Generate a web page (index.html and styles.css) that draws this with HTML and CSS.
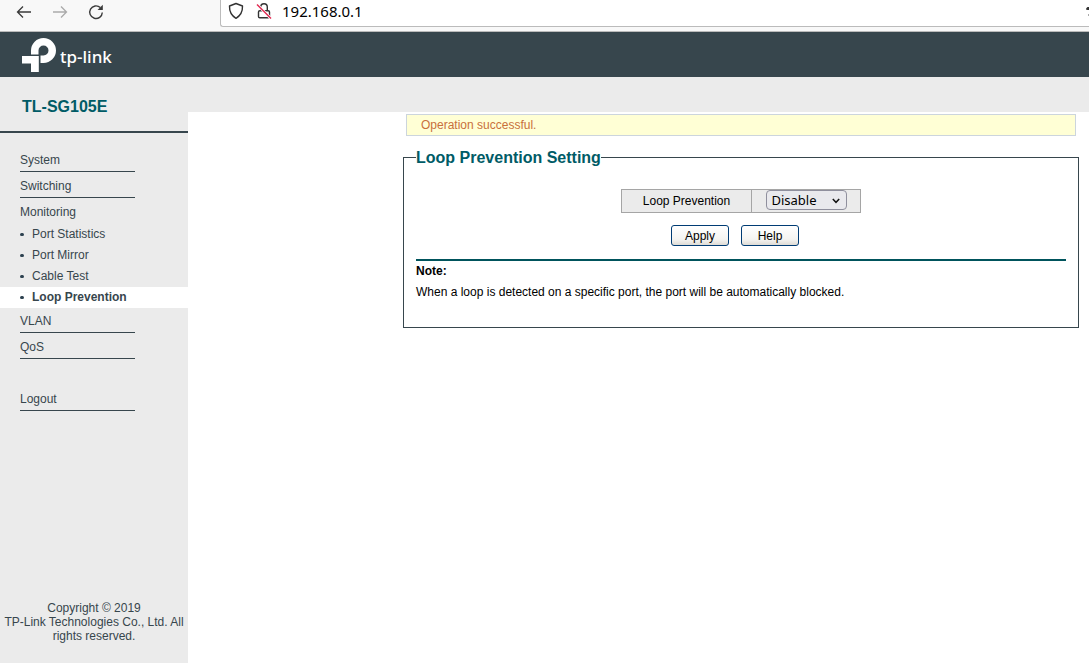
FILE: index.html
```html
<!DOCTYPE html>
<html lang="en">
<head>
<meta charset="utf-8">
<title>TL-SG105E</title>
<link rel="stylesheet" href="styles.css">
</head>
<body>
<div class="browser-bar">
  <div class="nav-buttons">
    <button class="icon-button" type="button" aria-label="Back"><svg width="16" height="16" viewBox="0 0 16 16" fill="none" stroke="#3a3a3a" stroke-width="1.3"><path d="M15 8H1.8M7 2.5L1.5 8L7 13.500"/></svg></button>
    <button class="icon-button" type="button" aria-label="Forward" disabled><svg width="16" height="16" viewBox="0 0 16 16" fill="none" stroke="#aaa" stroke-width="1.3"><path d="M1 8h13.200M9 2.500L14.500 8L9 13.500"/></svg></button>
    <button class="icon-button" type="button" aria-label="Reload"><svg width="16" height="16" viewBox="0 0 16 16" fill="none" stroke="#3a3a3a" stroke-width="1.4"><path d="M14.300 8.500A6.300 6.300 0 1 1 12.300 3.600"/><path d="M14.800 0.800v5.200h-5.200z" fill="#3a3a3a" stroke="none"/></svg></button>
  </div>
  <div class="address">
    <svg width="16" height="18" viewBox="0 0 16 18" fill="none" stroke="#333" stroke-width="1.400"><path d="M8 1.500L14.500 4C14.700 9.500 13 13.300 8 16.300C3 13.300 1.300 9.500 1.500 4Z" stroke-linejoin="round"/></svg>
    <svg width="16" height="18" viewBox="0 0 16 18" fill="none" stroke="#333" stroke-width="1.400"><rect x="2.500" y="8.700" width="11" height="7" rx="1.300"/><path d="M4.700 8.500V5a3.300 3.300 0 0 1 6.600 0v3.500"/><path d="M1 2.500L15 16.500" stroke="#fff" stroke-width="3"/><path d="M1 2.500L15 16.500" stroke="#e22850"/></svg>
    <input class="url" type="text" value="192.168.0.1" aria-label="Address">
    <svg class="edge-icon" width="3" height="12" viewBox="0 0 3 12"><path d="M0 3.500L1.500 2H3V5H1.500L0 4.500Z" fill="#333"/><path d="M2 9h1v2h-1z" fill="#aaa"/></svg>
  </div>
</div>
<header class="brand-bar">
  <svg class="logo" width="34" height="34" viewBox="0 0 34 34" fill="#fff"><path d="M9 16.500V12.500A12.500 12.500 0 1 1 21.500 25H18.500V17.500H21.500A5 5 0 1 0 16.500 12.500V16.500Z"/><path d="M0 18H16.800V34H9V25.500H0Z"/></svg>
  <span class="wordmark">tp-link</span>
</header>
<div class="layout">
  <aside class="sidebar">
    <h1 class="model">TL-SG105E</h1>
    <nav>
      <ul class="menu">
        <li><a class="item" href="#">System</a></li>
        <li><a class="item" href="#">Switching</a></li>
        <li><a class="item open" href="#">Monitoring</a>
          <ul class="submenu">
            <li><a class="subitem" href="#">Port Statistics</a></li>
            <li><a class="subitem" href="#">Port Mirror</a></li>
            <li><a class="subitem" href="#">Cable Test</a></li>
            <li><a class="subitem current" href="#">Loop Prevention</a></li>
          </ul>
        </li>
        <li><a class="item" href="#">VLAN</a></li>
        <li><a class="item" href="#">QoS</a></li>
        <li class="logout"><a class="item" href="#">Logout</a></li>
      </ul>
    </nav>
    <footer class="copyright">Copyright © 2019<br>TP-Link Technologies Co., Ltd. All rights reserved.</footer>
  </aside>
  <main class="content">
    <div class="band"></div>
    <div class="panel">
      <p class="message" role="status">Operation successful.</p>
      <fieldset class="settings">
        <legend>Loop Prevention Setting</legend>
        <table class="form-table">
          <tr>
            <td class="label-cell"><label for="loop">Loop Prevention</label></td>
            <td class="field-cell"><div class="select-wrap"><select id="loop"><option>Disable</option><option>Enable</option></select><svg class="chevron" width="8" height="6" viewBox="0 0 8 6" fill="none" stroke="#111" stroke-width="1.500"><path d="M0.800 1L4 4.300L7.200 1"/></svg></div></td>
          </tr>
        </table>
        <div class="actions">
          <button class="action" type="button">Apply</button>
          <button class="action" type="button">Help</button>
        </div>
        <div class="note">
          <strong>Note:</strong>
          <p>When a loop is detected on a specific port, the port will be automatically blocked.</p>
        </div>
      </fieldset>
    </div>
  </main>
</div>
</body>
</html>
```
FILE: styles.css
```css
* { box-sizing: border-box; }
body {
  display: flex;
  flex-direction: column;
  min-height: 100vh;
  margin: 0;
  background: #fff;
  color: #000;
  font: 12px/14px "Liberation Sans", Arial, sans-serif;
}
h1, p, ul { margin: 0; padding: 0; }
ul { list-style: none; }
a { color: inherit; text-decoration: none; }

.browser-bar {
  display: flex;
  height: 32px;
  background: #f8f8f8;
  border-bottom: 1px solid #bbb;
}
.nav-buttons {
  display: flex;
  align-items: flex-start;
  gap: 20px;
  width: 220px;
  padding: 4px 0 0 16px;
}
.icon-button { padding: 0; border: 0; background: none; height: 16px; }
.icon-button svg { display: block; }
.address {
  display: flex;
  flex: 1;
  align-items: center;
  gap: 12px;
  height: 27px;
  padding: 0 0 4px 7px;
  background: #fff;
  border: 1px solid #bbb;
  border-width: 0 0 1px 1px;
  border-bottom-left-radius: 3px;
}
.url {
  flex: 1;
  min-width: 0;
  margin-left: -2px;
  padding: 0;
  border: 0;
  background: none;
  color: #000;
  font: 15px/20px "Noto Sans", sans-serif;
}

.brand-bar {
  display: flex;
  gap: 4px;
  height: 45px;
  padding: 6px 22px;
  background: #37464d;
  color: #fff;
}
.wordmark { padding-top: 7px; font: 500 17px/24px "Noto Sans", sans-serif; }

.layout { display: flex; flex: 1; }
.sidebar {
  display: flex;
  flex: 0 0 188px;
  flex-direction: column;
  background: #ebebeb;
  color: #37464d;
}
.model {
  height: 56px;
  padding: 21px 22px 0;
  border-bottom: 2px solid #37464d;
  color: #005b66;
  font-size: 16px;
  line-height: 18px;
}
.menu { padding-top: 13px; }
.item {
  display: block;
  width: 115px;
  height: 26px;
  margin-left: 20px;
  padding-top: 7px;
  border-bottom: 1px solid #37464d;
}
.item.open { border-bottom: 0; }
.submenu { margin-bottom: -1px; }
.subitem {
  display: flex;
  align-items: center;
  gap: 8px;
  height: 21px;
  padding: 0 0 1px 20px;
}
.subitem::before {
  content: "";
  width: 4px;
  height: 3px;
  border-radius: 2px;
  background: #2d4150;
}
.current { background: #fff; font-weight: bold; }
.logout { margin-top: 26px; }
.copyright { margin-top: auto; padding: 0 4px 20px; text-align: center; }

.content { flex: 1; min-width: 0; }
.band { height: 35px; background: #ebebeb; }
.panel { padding: 2px 10px 0 215px; }
.message {
  margin: 0 3px;
  padding: 3px 14px;
  background: #ffffd5;
  border: 1px solid #ccd5dd;
  color: #c8703c;
}
.settings {
  margin: 12px 0 0;
  padding: 22px 12px 28px;
  border: 1px solid #37464d;
}
.settings legend {
  padding: 1px 0 0;
  color: #005b66;
  font-size: 16px;
  font-weight: bold;
  line-height: 18px;
}
.form-table {
  width: 240px;
  margin: 0 auto;
  border-collapse: collapse;
  background: #ebebeb;
}
.form-table td {
  height: 23px;
  padding: 0;
  border: 1px solid #a5a5a5;
  text-align: center;
}
.form-table .field-cell { vertical-align: top; }
.label-cell { width: 130px; }
.select-wrap { position: relative; width: 81px; margin: 0 auto; }
.select-wrap select {
  display: block;
  width: 100%;
  height: 20px;
  padding: 0 5px;
  appearance: none;
  background: #e9e9ed;
  border: 1px solid #8f8f9d;
  border-radius: 4px;
  color: #000;
  font: 13px/18px "Noto Sans", sans-serif;
}
.chevron { position: absolute; top: 8px; right: 7px; pointer-events: none; }
.actions {
  display: flex;
  justify-content: center;
  gap: 12px;
  margin: 12px 0 13px;
  padding-right: 12px;
}
.action {
  width: 58px;
  height: 21px;
  padding: 0;
  border: 1px solid #003c74;
  border-radius: 3px;
  background: linear-gradient(#fff, #f4f4f1 70%, #dedbd5);
  color: #000;
  font: 12px/14px "Liberation Sans", Arial, sans-serif;
}
.note { padding-top: 3px; border-top: 2px solid #00545c; }
.note strong { display: block; margin-bottom: 7px; }
```
